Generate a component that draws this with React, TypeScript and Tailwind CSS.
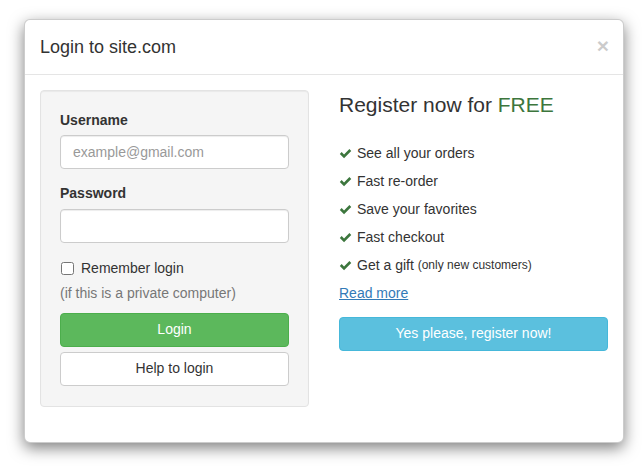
import { useState } from 'react'

const features = ['See all your orders', 'Fast re-order', 'Save your favorites', 'Fast checkout']

function Check() {
  return (
    <svg viewBox="0 0 16 16" className="w-[13px] h-[13px] mr-[5px] shrink-0" fill="#3c763d">
      <path d="M1 8.6 L3.3 6.3 L6.2 9.2 L12.8 2.6 L15.1 4.9 L6.2 13.8 Z" />
    </svg>
  )
}

export default function App() {
  const [remember, setRemember] = useState(false)

  return (
    <div className="min-h-[470px] bg-white pt-[19px] pl-[24px] text-[14px] text-[#333] font-['Liberation_Sans',Arial,sans-serif] leading-[1.42857]">
      <div className="w-[600px] bg-white border border-black/20 rounded-[6px] shadow-[0_5px_15px_rgba(0,0,0,0.5)]">
        {/* Header */}
        <div className="flex items-start justify-between p-[15px] border-b border-[#e5e5e5]">
          <h4 className="text-[18px] leading-[24px]">Login to site.com</h4>
          <button className="text-[21px] font-bold leading-none text-black opacity-20 -mr-[1px]">×</button>
        </div>

        {/* Body */}
        <div className="p-[15px] flex gap-[30px]">
          {/* Login well */}
          <div className="w-[269px] mb-[20px] bg-[#f5f5f5] border border-[#e3e3e3] rounded-[4px] p-[19px] pb-[20px] shadow-[inset_0_1px_1px_rgba(0,0,0,0.05)]">
            <label className="block font-bold mb-[4px] mt-[1px]">Username</label>
            <input
              className="block w-full h-[34px] px-[12px] bg-white border border-[#ccc] rounded-[4px] text-[14px] placeholder:text-[#999] shadow-[inset_0_1px_1px_rgba(0,0,0,0.075)] outline-none"
              placeholder="example@gmail.com"
            />
            <label className="block font-bold mt-[15px] mb-[5px]">Password</label>
            <input
              type="password"
              className="block w-full h-[34px] px-[12px] bg-white border border-[#ccc] rounded-[4px] shadow-[inset_0_1px_1px_rgba(0,0,0,0.075)] outline-none"
            />
            <label className="flex items-center mt-[16px] h-[20px]">
              <input
                type="checkbox"
                checked={remember}
                onChange={(e) => setRemember(e.target.checked)}
                className="w-[13px] h-[13px] mr-[7px] ml-[1px]"
              />
              <span>Remember login</span>
            </label>
            <p className="text-[#777] mt-[5px]">(if this is a private computer)</p>
            <button className="block w-full h-[34px] mt-[9px] bg-[#5cb85c] border border-[#4cae4c] rounded-[4px] text-white">
              Login
            </button>
            <button className="block w-full h-[34px] mt-[5px] bg-white border border-[#ccc] rounded-[4px] text-[#333]">
              Help to login
            </button>
          </div>

          {/* Register column */}
          <div className="w-[269px]">
            <p className="text-[21px] leading-[1.4] font-light mb-[20px]">
              Register now for <span className="text-[#3c763d]">FREE</span>
            </p>
            <ul className="leading-[2]">
              {features.map((f) => (
                <li key={f} className="flex items-center">
                  <Check />
                  {f}
                </li>
              ))}
              <li className="flex items-center">
                <Check />
                Get a gift&nbsp;<small className="text-[12px]">(only new customers)</small>
              </li>
              <li>
                <a href="#" className="text-[#337ab7] underline">Read more</a>
              </li>
            </ul>
            <button className="block w-full h-[34px] mt-[10px] bg-[#5bc0de] border border-[#46b8da] rounded-[4px] text-white">
              Yes please, register now!
            </button>
          </div>
        </div>
      </div>
    </div>
  )
}
